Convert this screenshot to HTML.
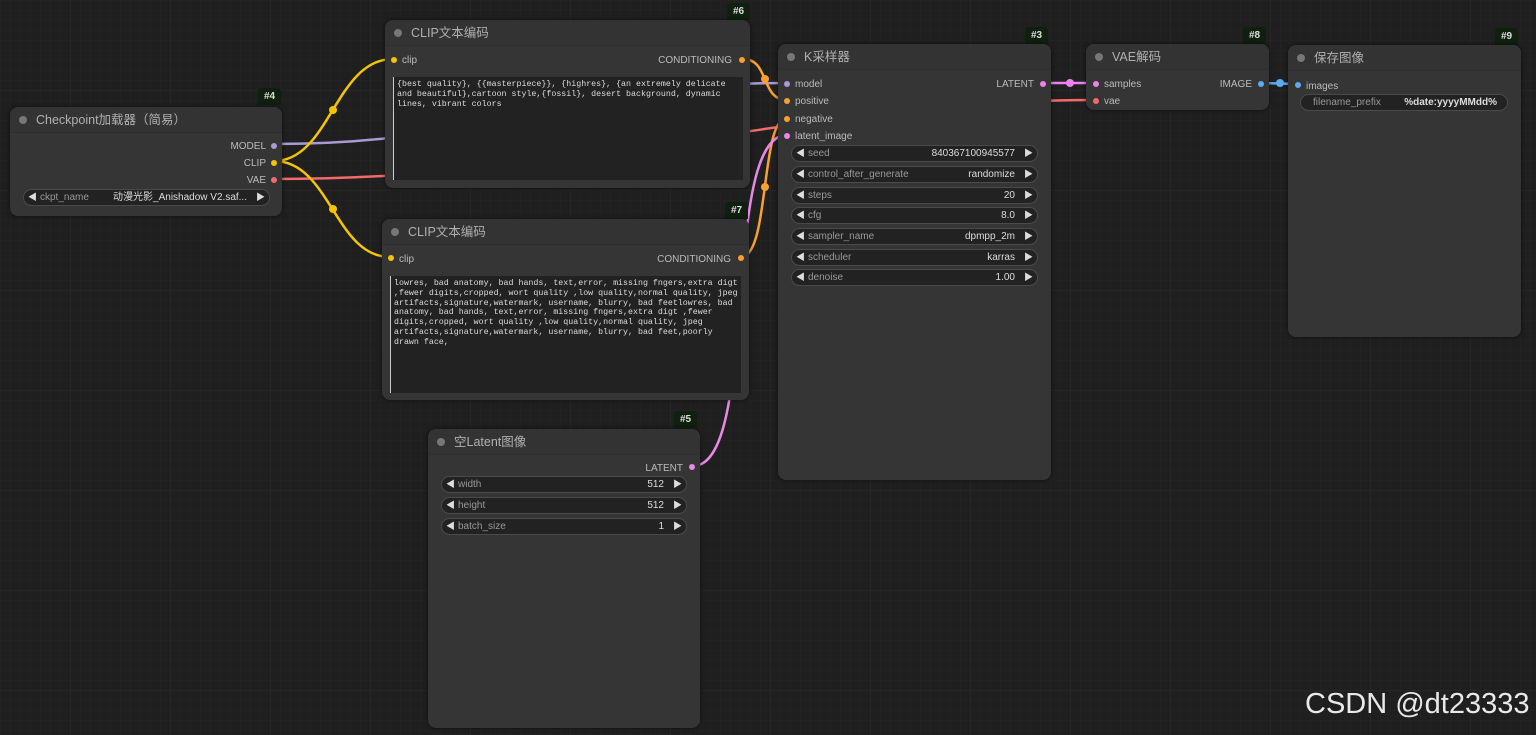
<!DOCTYPE html>
<html><head><meta charset="utf-8"><style>
*{box-sizing:border-box;margin:0;padding:0}
body{width:1536px;height:735px;overflow:hidden;background:#1f1f1f;font-family:"Liberation Sans","Noto Sans CJK SC",sans-serif;position:relative;
background-image:linear-gradient(#262626 1px,transparent 1px),linear-gradient(90deg,#262626 1px,transparent 1px),linear-gradient(#222 1px,transparent 1px),linear-gradient(90deg,#222 1px,transparent 1px);
background-size:100px 100px,100px 100px,10px 10px,10px 10px;background-position:-30px -10px}
svg.links{position:absolute;left:0;top:0}
.n{position:absolute;background:#353535;border-radius:8px;box-shadow:0 0 4px rgba(0,0,0,.6)}
.t{height:26px;border-bottom:1px solid #2e2e2e;color:#b0b0b0;font-size:12.5px;line-height:26px;padding-left:26px;position:relative;background:#333;border-radius:8px 8px 0 0}
.t:before{content:"";position:absolute;left:9px;top:9px;width:8px;height:8px;border-radius:50%;background:#777}
.b{position:absolute;background:#0f200f;color:#ddd;font-size:10px;font-weight:bold;padding:3px 6px;border-radius:4px 4px 0 0;height:17px}
.s{position:absolute;font-size:10px;color:#bbb;line-height:12px;margin-top:2px}
.d{position:absolute;width:6px;height:6px;border-radius:50%;margin-top:1px}
.w{position:absolute;height:17px;border:1px solid #4a4a4a;background:#222;border-radius:9px;font-size:10px;line-height:15px;color:#999}
.w .l{position:absolute;left:16px}
.w .v{position:absolute;right:22px;color:#ddd}
.w:before{content:"◀";position:absolute;left:4px;color:#ddd;font-size:9px}
.w:after{content:"▶";position:absolute;right:4px;color:#ddd;font-size:9px}
.ta{position:absolute;background:#222;color:#ddd;font-family:"Liberation Mono","Noto Sans CJK SC",monospace;font-size:8.3px;line-height:9.8px;padding:3px 3px;border-left:1px solid #ccc;word-break:break-word}
</style></head><body>
<svg class="links" width="1536" height="735">
<g fill="none" stroke-width="2.5">
<path d="M274 144 C500 144 560 83 787 83" stroke="#a89bd4"/>
<path d="M274 179 C600 179 800 100 1095 100" stroke="#f46a6a"/>
<path d="M274 161 C330 161 335 59 393 59" stroke="#f5c400"/>
<path d="M274 161 C330 161 335 257 390 257" stroke="#f5c400"/>
<path d="M743 59 C770 59 760 100 787 100" stroke="#f9a02d"/>
<path d="M741 257 C770 257 760 118 787 118" stroke="#f9a02d"/>
<path d="M693 466 C760 466 720 135 787 135" stroke="#e988e8"/>
<path d="M1043 83 L1096 83" stroke="#f080f0"/>
<path d="M1261 83 L1297 84" stroke="#5aabf0"/>
</g>
<g>
<circle cx="333" cy="110" r="4" fill="#f5c400"/><circle cx="333" cy="209" r="4" fill="#f5c400"/>
<circle cx="765" cy="79" r="4" fill="#f9a02d"/><circle cx="765" cy="187" r="4" fill="#f9a02d"/>
<circle cx="1070" cy="83" r="4" fill="#f080f0"/><circle cx="1280" cy="83" r="4" fill="#5aabf0"/>
</g>
</svg>

<div class="b" style="left:258px;top:88px">#4</div>
<div class="n" style="left:10px;top:107px;width:272px;height:109px">
<div class="t">Checkpoint加载器（简易）</div>
<div class="s" style="right:16px;top:32px">MODEL</div><div class="d" style="right:5px;top:35px;background:#a89bd4"></div>
<div class="s" style="right:16px;top:49px">CLIP</div><div class="d" style="right:5px;top:52px;background:#f5c400"></div>
<div class="s" style="right:16px;top:66px">VAE</div><div class="d" style="right:5px;top:69px;background:#f46a6a"></div>
<div class="w" style="left:13px;top:82px;width:247px"><span class="l">ckpt_name</span><span class="v">动漫光影_Anishadow V2.saf...</span></div>
</div>

<div class="b" style="left:727px;top:3px">#6</div>
<div class="n" style="left:385px;top:20px;width:365px;height:168px">
<div class="t">CLIP文本编码</div>
<div class="d" style="left:6px;top:36px;background:#f5c400"></div><div class="s" style="left:17px;top:33px">clip</div>
<div class="s" style="right:18px;top:33px">CONDITIONING</div><div class="d" style="right:5px;top:36px;background:#f9a02d"></div>
<div class="ta" style="left:8px;top:57px;width:350px;height:103px">{best quality}, {{masterpiece}}, {highres}, {an extremely delicate and beautiful},cartoon style,{fossil}, desert background, dynamic lines, vibrant colors</div>
</div>

<div class="b" style="left:725px;top:202px">#7</div>
<div class="n" style="left:382px;top:219px;width:367px;height:181px">
<div class="t">CLIP文本编码</div>
<div class="d" style="left:6px;top:35px;background:#f5c400"></div><div class="s" style="left:17px;top:33px">clip</div>
<div class="s" style="right:18px;top:33px">CONDITIONING</div><div class="d" style="right:5px;top:35px;background:#f9a02d"></div>
<div class="ta" style="left:8px;top:57px;width:351px;height:117px">lowres, bad anatomy, bad hands, text,error, missing fngers,extra digt ,fewer digits,cropped, wort quality ,low quality,normal quality, jpeg artifacts,signature,watermark, username, blurry, bad feetlowres, bad anatomy, bad hands, text,error, missing fngers,extra digt ,fewer digits,cropped, wort quality ,low quality,normal quality, jpeg artifacts,signature,watermark, username, blurry, bad feet,poorly drawn face,</div>
</div>

<div class="b" style="left:674px;top:411px">#5</div>
<div class="n" style="left:428px;top:429px;width:272px;height:299px">
<div class="t">空Latent图像</div>
<div class="s" style="right:17px;top:32px">LATENT</div><div class="d" style="right:5px;top:34px;background:#e988e8"></div>
<div class="w" style="left:13px;top:47px;width:246px"><span class="l">width</span><span class="v">512</span></div>
<div class="w" style="left:13px;top:68px;width:246px"><span class="l">height</span><span class="v">512</span></div>
<div class="w" style="left:13px;top:89px;width:246px"><span class="l">batch_size</span><span class="v">1</span></div>
</div>

<div class="b" style="left:1025px;top:27px">#3</div>
<div class="n" style="left:778px;top:44px;width:273px;height:436px">
<div class="t">K采样器</div>
<div class="d" style="left:6px;top:36px;background:#a89bd4"></div><div class="s" style="left:17px;top:33px">model</div>
<div class="d" style="left:6px;top:53px;background:#f9a02d"></div><div class="s" style="left:17px;top:50px">positive</div>
<div class="d" style="left:6px;top:71px;background:#f9a02d"></div><div class="s" style="left:17px;top:68px">negative</div>
<div class="d" style="left:6px;top:88px;background:#e988e8"></div><div class="s" style="left:17px;top:85px">latent_image</div>
<div class="s" style="right:17px;top:33px">LATENT</div><div class="d" style="right:5px;top:36px;background:#f080f0"></div>
<div class="w" style="left:13px;top:101px;width:247px"><span class="l">seed</span><span class="v">840367100945577</span></div>
<div class="w" style="left:13px;top:122px;width:247px"><span class="l">control_after_generate</span><span class="v">randomize</span></div>
<div class="w" style="left:13px;top:143px;width:247px"><span class="l">steps</span><span class="v">20</span></div>
<div class="w" style="left:13px;top:163px;width:247px"><span class="l">cfg</span><span class="v">8.0</span></div>
<div class="w" style="left:13px;top:184px;width:247px"><span class="l">sampler_name</span><span class="v">dpmpp_2m</span></div>
<div class="w" style="left:13px;top:205px;width:247px"><span class="l">scheduler</span><span class="v">karras</span></div>
<div class="w" style="left:13px;top:225px;width:247px"><span class="l">denoise</span><span class="v">1.00</span></div>
</div>

<div class="b" style="left:1243px;top:27px">#8</div>
<div class="n" style="left:1086px;top:44px;width:183px;height:66px">
<div class="t">VAE解码</div>
<div class="d" style="left:7px;top:36px;background:#f080f0"></div><div class="s" style="left:18px;top:33px">samples</div>
<div class="d" style="left:7px;top:53px;background:#f46a6a"></div><div class="s" style="left:18px;top:50px">vae</div>
<div class="s" style="right:17px;top:33px">IMAGE</div><div class="d" style="right:5px;top:36px;background:#5aabf0"></div>
</div>

<div class="b" style="left:1495px;top:28px">#9</div>
<div class="n" style="left:1288px;top:45px;width:233px;height:292px">
<div class="t">保存图像</div>
<div class="d" style="left:7px;top:36px;background:#5aabf0"></div><div class="s" style="left:18px;top:34px">images</div>
<div class="w np" style="left:12px;top:49px;width:208px"><span class="l" style="left:12px">filename_prefix</span><span class="v" style="right:10px;font-weight:bold">%date:yyyyMMdd%</span></div>
</div>
<style>.w.np:before,.w.np:after{content:none}</style>

<div style="position:absolute;left:1305px;top:688px;color:#fff;font-size:29px;opacity:.9;white-space:nowrap">CSDN @dt23333</div>
</body></html>
